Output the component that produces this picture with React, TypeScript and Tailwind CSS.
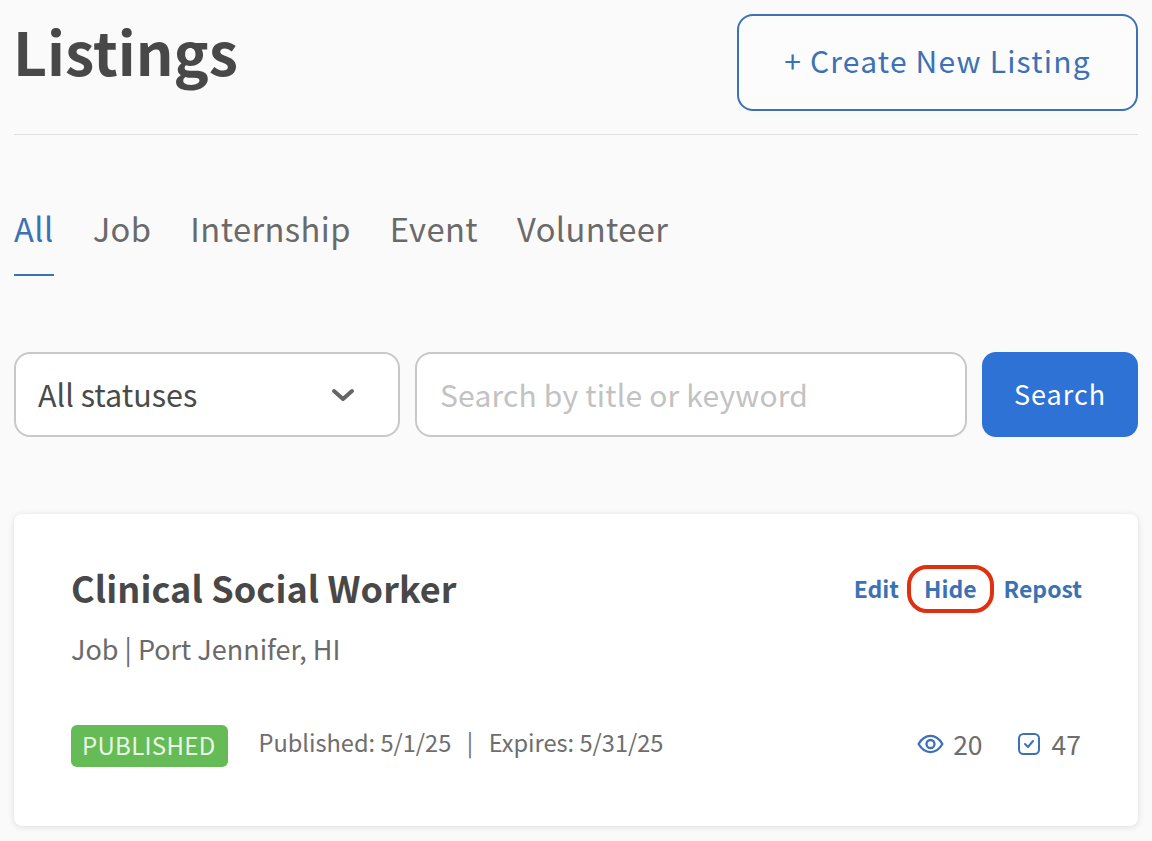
import React from "react";

const F = "font-['Noto_Sans_CJK_SC','Liberation_Sans',sans-serif]";

export default function App() {
  return (
    <div className={`${F} w-[1152px] h-[841px] overflow-hidden bg-[#fafafa] px-[14px] pt-[13px] text-[#4a4a4a]`}>
      <header className="flex items-start justify-between h-[121px] border-b border-[#e2e2e2] box-content">
        <h1 className="-ml-[1px] text-[59px] leading-[76px] font-bold text-[#484848]">Listings</h1>
        <button className="mt-[1px] w-[401px] h-[97px] pb-[6px] rounded-[16px] border-2 border-[#3c72b4] text-[#3c72b4] text-[30px] leading-none tracking-[1.2px] bg-white/40 flex items-center justify-center">
          + Create New Listing
        </button>
      </header>

      <nav className="flex gap-[39px] mt-[69px] text-[32.700px] leading-[48px] text-[#6a6a6a] tracking-[0.4px]">
        <div className="flex flex-col">
          <span className="text-[#3c72b4] h-[70px]">All</span>
          <span className="h-[2px] bg-[#3c72b4]" />
        </div>
        <span>Job</span>
        <span>Internship</span>
        <span>Event</span>
        <span>Volunteer</span>
      </nav>

      <div className="flex gap-[15px] mt-[76px] h-[85px]">
        <div className="w-[386px] rounded-[16px] border-2 border-[#c8c8c8] bg-white flex items-center justify-between pl-[22px] pr-[43px] text-[30.500px] leading-none text-[#4a4a4a]">
          <span>All statuses</span>
          <svg width="24" height="16" viewBox="0 0 24 16" fill="none" stroke="#666" strokeWidth="4" strokeLinecap="round" strokeLinejoin="round">
            <path d="M3 4l9 8 9-8" />
          </svg>
        </div>
        <div className="w-[552px] rounded-[16px] border-2 border-[#c8c8c8] bg-white flex items-center pl-[23px] pb-[2px] text-[30px] leading-none text-[#c2c2c2] tracking-[0.2px]">
          Search by title or keyword
        </div>
        <button className="flex-1 rounded-[14px] bg-[#2e72d6] text-white text-[27px] leading-none tracking-[1px] pb-[2px]">Search</button>
      </div>

      <section className="mt-[77px] h-[312px] rounded-[8px] bg-white shadow-[0_1px_6px_rgba(0,0,0,0.12)] px-[57px] pt-[48px]">
        <div className="flex items-start justify-between">
          <div>
            <h2 className="text-[36px] leading-[50px] font-bold text-[#484848] tracking-[0.1px]">Clinical Social Worker</h2>
            <p className="mt-[19px] text-[27px] leading-[36px] text-[#6a6a6a]">Job | Port Jennifer, HI</p>
          </div>
          <div className="flex items-center -mr-[1px] text-[23px] leading-[34px] font-bold text-[#3c72b4] mt-[9px]">
            <span>Edit</span>
            <span className="relative ml-[25px] mr-[27px]">
              Hide
              <span className="absolute -left-[17px] -right-[17px] -top-[6px] -bottom-[8px] rounded-[20px] border-[4px] border-[#e0300f]" />
            </span>
            <span>Repost</span>
          </div>
        </div>
        <div className="flex items-center mt-[57px]">
          <span className="rounded-[6px] bg-[#65bb55] text-[#e9f7e5] text-[24px] leading-[40px] h-[42px] pl-[11px] pr-[13px] tracking-[0.3px]">PUBLISHED</span>
          <span className="ml-[30px] mb-[8px] text-[23.600px] leading-[36px] text-[#6e6e6e]">Published: 5/1/25</span>
          <span className="mx-[15.500px] mb-[8px] text-[23.600px] leading-[36px] text-[#6e6e6e]">|</span>
          <span className="mb-[8px] text-[23.600px] leading-[36px] text-[#6e6e6e]">Expires: 5/31/25</span>
          <div className="ml-auto mb-[4px] flex items-center text-[26.500px] leading-[36px] text-[#6e6e6e]">
            <svg width="27" height="20" viewBox="0 0 28 21" fill="none" stroke="#3c72b4" strokeWidth="2.400" strokeLinejoin="round">
              <path d="M1.500 10.500C5 4.500 9 2 14 2S23 4.500 26.500 10.500C23 16.500 19 19 14 19S5 16.500 1.500 10.500Z" />
              <circle cx="14" cy="10.500" r="4.200" />
            </svg>
            <span className="ml-[9px]">20</span>
            <svg className="ml-[34px]" width="24" height="24" viewBox="0 0 24 24" fill="none" stroke="#3c72b4" strokeWidth="2" strokeLinecap="round" strokeLinejoin="round">
              <rect x="2" y="2" width="20" height="20" rx="4.500" />
              <path d="M8 12l3 3 5-6" />
            </svg>
            <span className="ml-[11px]">47</span>
          </div>
        </div>
      </section>
    </div>
  );
}
